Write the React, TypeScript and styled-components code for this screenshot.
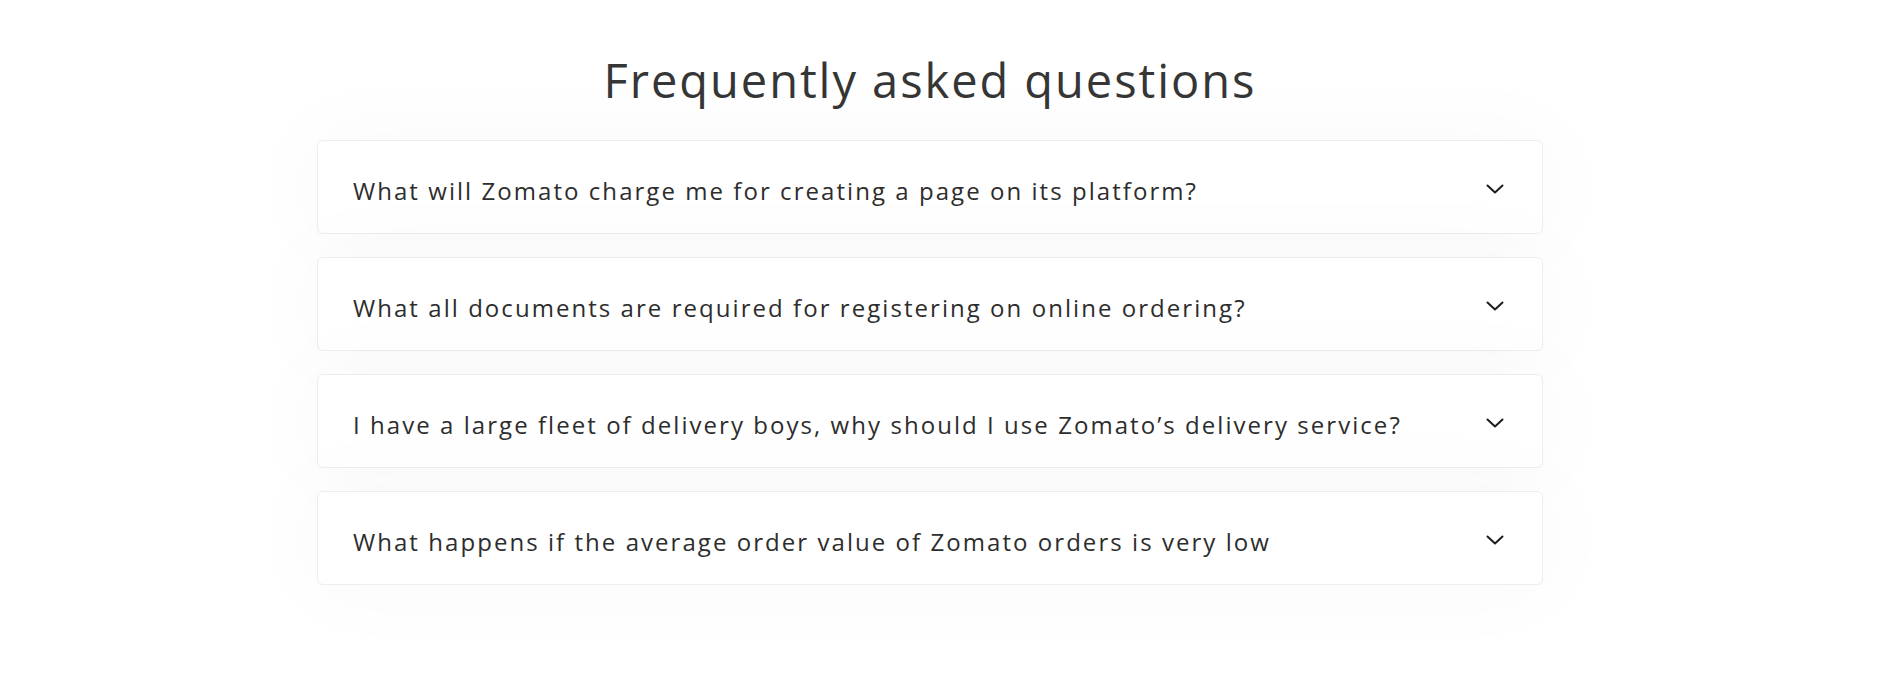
import React from "react";
import styled, { createGlobalStyle } from "styled-components";

const GlobalStyle = createGlobalStyle`
  html, body { margin: 0; padding: 0; background: #ffffff; }
  body { font-family: "Open Sans", "Noto Sans", sans-serif; color: #363636; }
  * { box-sizing: border-box; }
`;

const Page = styled.main`
  display: flex;
  flex-direction: column;
  align-items: center;
  padding: 0 19px 0 0;
  width: 100%;
  min-height: 680px;
`;

const Title = styled.h2`
  margin: 52px 0 32px;
  font-family: "Open Sans", "Noto Sans", sans-serif;
  font-weight: 400;
  font-size: 47px;
  line-height: 1.2;
  color: #363636;
  letter-spacing: 1.95px;
`;

const List = styled.div`
  width: 1226px;
  display: flex;
  flex-direction: column;
  gap: 23px;
`;

const Card = styled.div`
  height: 94px;
  background: #ffffff;
  border: 1px solid #ededed;
  border-radius: 6px;
  box-shadow: 0 0 90px 10px rgba(28, 28, 28, 0.025);
  display: flex;
  align-items: center;
  justify-content: space-between;
  padding: 7px 38px 0 35px;
  cursor: pointer;
`;

const Question = styled.span`
  font-family: "Open Sans", "Noto Sans", sans-serif;
  font-size: 24px;
  font-weight: 400;
  color: #2d2d2d;
  letter-spacing: 2.05px;
`;

const Chevron = styled.svg`
  width: 18px;
  height: 18px;
  flex: none;
  margin-top: -4px;
`;

const questions = [
  "What will Zomato charge me for creating a page on its platform?",
  "What all documents are required for registering on online ordering?",
  "I have a large fleet of delivery boys, why should I use Zomato\u2019s delivery service?",
  "What happens if the average order value of Zomato orders is very low",
];

export default function App() {
  return (
    <>
      <GlobalStyle />
      <Page>
        <Title>Frequently asked questions</Title>
        <List>
          {questions.map((q) => (
            <Card key={q}>
              <Question>{q}</Question>
              <Chevron viewBox="0 0 18 18" fill="none">
                <path
                  d="M1.5 5.5 L9 12.5 L16.5 5.5"
                  stroke="#1c1c1c"
                  strokeWidth="2"
                  strokeLinecap="round"
                  strokeLinejoin="round"
                />
              </Chevron>
            </Card>
          ))}
        </List>
      </Page>
    </>
  );
}
